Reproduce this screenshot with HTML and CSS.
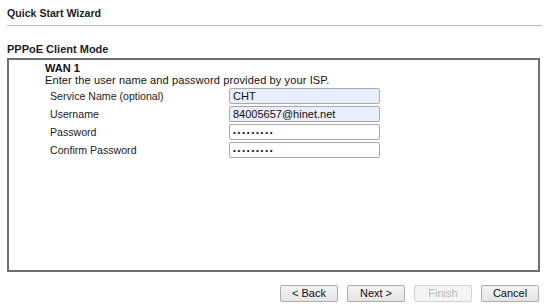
FILE: index.html
```html
<!DOCTYPE html>
<html>
<head>
<meta charset="utf-8">
<link rel="stylesheet" href="styles.css">
</head>
<body>
<div class="page">
  <div class="title">Quick Start Wizard</div>
  <div class="rule"></div>
  <div class="section-title">PPPoE Client Mode</div>
  <div class="panel">
    <div class="wan">WAN 1</div>
    <div class="hint">Enter the user name and password provided by your ISP.</div>
    <div class="form">
      <label class="lbl">Service Name (optional)</label>
      <input class="field filled" type="text" value="CHT">
      <label class="lbl">Username</label>
      <input class="field filled" type="text" value="84005657@hinet.net">
      <label class="lbl">Password</label>
      <input class="field" type="password" value="123456789">
      <label class="lbl">Confirm Password</label>
      <input class="field" type="password" value="123456789">
    </div>
  </div>
  <div class="buttons">
    <button class="btn">&lt; Back</button>
    <button class="btn">Next &gt;</button>
    <button class="btn disabled" disabled>Finish</button>
    <button class="btn">Cancel</button>
  </div>
</div>
</body>
</html>
```

FILE: styles.css
```css
html, body {
  margin: 0;
  padding: 0;
  background: #fff;
}
body {
  font-family: "Liberation Sans", Arial, sans-serif;
  font-size: 11px;
  color: #111;
}
.page {
  padding: 7px 8px 0 7px;
  width: 550px;
  box-sizing: border-box;
}
.title {
  font-weight: bold;
  line-height: 13px;
  color: #222;
  font-size: 10.6px;
}
.rule {
  height: 1px;
  background: #b8b8b8;
  margin-top: 5px;
}
.section-title {
  font-weight: bold;
  line-height: 13px;
  margin-top: 17px;
  color: #222;
}
.panel {
  margin-top: 2px;
  width: 533px;
  height: 214px;
  box-sizing: border-box;
  border: 2px solid #6f6f6f;
  padding: 2px 0 0 36px;
}
.wan {
  font-weight: bold;
  line-height: 12px;
}
.hint {
  line-height: 13px;
  letter-spacing: 0.12px;
}
.form {
  display: grid;
  grid-template-columns: 179px 151px;
  grid-auto-rows: 16px;
  row-gap: 2px;
  margin: 1px 0 0 5px;
  align-items: center;
}
.lbl {
  line-height: 16px;
  color: #222;
  font-size: 10.6px;
}
.field {
  box-sizing: border-box;
  width: 151px;
  height: 16px;
  margin: 0;
  padding: 0 3px;
  border: 1px solid #a9a9a9;
  border-radius: 2px;
  background: #fff;
  font-family: "Liberation Sans", Arial, sans-serif;
  font-size: 11px;
  color: #111;
  outline: none;
}
.field.filled {
  background: #e8eefb;
}
input[type="password"].field {
  font-size: 8px;
  letter-spacing: 1.8px;
}
.buttons {
  display: flex;
  justify-content: flex-end;
  gap: 9px;
  margin-top: 13px;
  padding-right: 3px;
}
.btn {
  width: 58px;
  height: 17px;
  box-sizing: border-box;
  padding: 0;
  border: 1px solid #acacac;
  border-radius: 2px;
  background: linear-gradient(#f4f4f4, #e4e4e4);
  font-family: "Liberation Sans", Arial, sans-serif;
  font-size: 11px;
  color: #111;
  line-height: 15px;
}
.btn.disabled {
  color: #b8b8b8;
  border-color: #d2d2d2;
  background: #f4f4f4;
}
```
